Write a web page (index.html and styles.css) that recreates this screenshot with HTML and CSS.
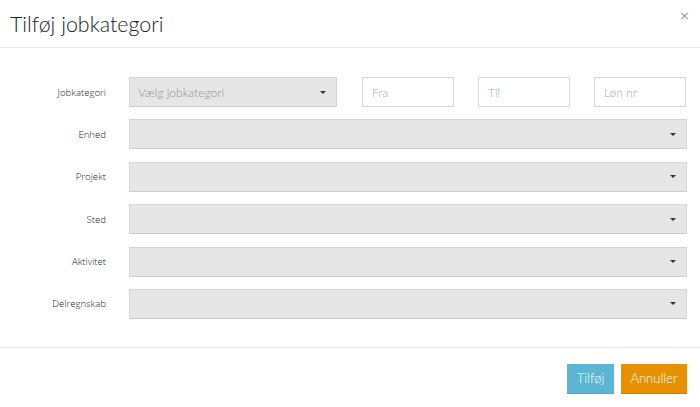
FILE: index.html
```html
<!DOCTYPE html>
<html lang="da">
<head>
<meta charset="utf-8">
<title>Tilføj jobkategori</title>
<link rel="stylesheet" href="styles.css">
</head>
<body>
<div class="modal">
  <div class="modal-header">
    <h4 class="modal-title">Tilføj jobkategori</h4>
    <span class="close">×</span>
  </div>
  <div class="modal-body">
    <div class="form">
      <label class="label">Jobkategori</label>
      <div class="row-first">
        <div class="select select-short"><span class="placeholder">Vælg jobkategori</span><span class="caret"></span></div>
        <div class="input"><span class="ph">Fra</span></div>
        <div class="input"><span class="ph">Til</span></div>
        <div class="input"><span class="ph">Løn nr</span></div>
      </div>
      <label class="label">Enhed</label>
      <div class="select"><span class="caret"></span></div>
      <label class="label">Projekt</label>
      <div class="select"><span class="caret"></span></div>
      <label class="label">Sted</label>
      <div class="select"><span class="caret"></span></div>
      <label class="label">Aktivitet</label>
      <div class="select"><span class="caret"></span></div>
      <label class="label">Delregnskab</label>
      <div class="select"><span class="caret"></span></div>
    </div>
  </div>
  <div class="modal-footer">
    <button class="btn btn-info">Tilføj</button>
    <button class="btn btn-warning">Annuller</button>
  </div>
</div>
</body>
</html>
```

FILE: styles.css
```css
html, body {
  margin: 0;
  padding: 0;
  background: #ffffff;
}
body {
  font-family: Lato, "Open Sans", sans-serif;
  color: #333333;
}
.modal {
  width: 700px;
  height: 407px;
  display: flex;
  flex-direction: column;
}
.modal-header {
  height: 47px;
  border-bottom: 1px solid #e5e5e5;
  display: flex;
  align-items: center;
  justify-content: space-between;
  padding: 0 10px 0 10px;
  box-sizing: content-box;
}
.modal-title {
  margin: 0;
  font-family: Lato, sans-serif;
  font-weight: 300;
  font-size: 21.4px;
  color: #222222;
  line-height: 24px;
  padding-top: 1px;
}
.close {
  font-size: 13px;
  color: #9a9a9a;
  line-height: 1;
  margin-top: -16px;
  font-family: "DejaVu Sans", sans-serif;
}
.modal-body {
  padding: 29px 13px 28px 0;
}
.form {
  display: grid;
  grid-template-columns: 106px 1fr;
  column-gap: 23px;
  row-gap: 12.4px;
  align-items: center;
}
.label {
  text-align: right;
  font-family: "Open Sans", sans-serif;
  font-size: 9.6px;
  font-weight: 300;
  color: #222222;
}
.row-first {
  display: flex;
  gap: 24px;
}
.select {
  height: 30px;
  box-sizing: border-box;
  background: #e6e6e6;
  border: 1px solid #d6d6d6;
  border-bottom-color: #cccccc;
  display: flex;
  align-items: center;
  justify-content: space-between;
  padding: 0 10px 0 8px;
}
.select-short {
  width: 208px;
  margin-right: 1px;
}
.placeholder {
  font-family: Lato, sans-serif;
  font-size: 12px;
  font-weight: 300;
  color: #8f8f8f;
}
.caret {
  width: 0;
  height: 0;
  border-left: 3px solid transparent;
  border-right: 3px solid transparent;
  border-top: 3px solid #333333;
  margin-left: auto;
}
.input {
  width: 92px;
  height: 30px;
  box-sizing: border-box;
  border: 1px solid #d9d9d9;
  background: #ffffff;
  display: flex;
  align-items: center;
  padding-left: 9px;
}
.ph {
  font-family: Lato, sans-serif;
  font-size: 12px;
  font-weight: 300;
  color: #ababab;
}
.modal-footer {
  border-top: 1px solid #e5e5e5;
  display: flex;
  justify-content: flex-end;
  gap: 7px;
  padding: 16px 13px 0 0;
}
.btn {
  height: 30px;
  border: none;
  font-family: Lato, sans-serif;
  font-size: 13px;
  font-weight: 300;
  color: #ffffff;
  padding: 0;
  cursor: pointer;
}
.btn-info {
  width: 47px;
  background: #5bb5d3;
  border-bottom: 1px solid #46a8c8;
}
.btn-warning {
  width: 66px;
  background: #e89100;
  border-bottom: 1px solid #d07f00;
}
```
